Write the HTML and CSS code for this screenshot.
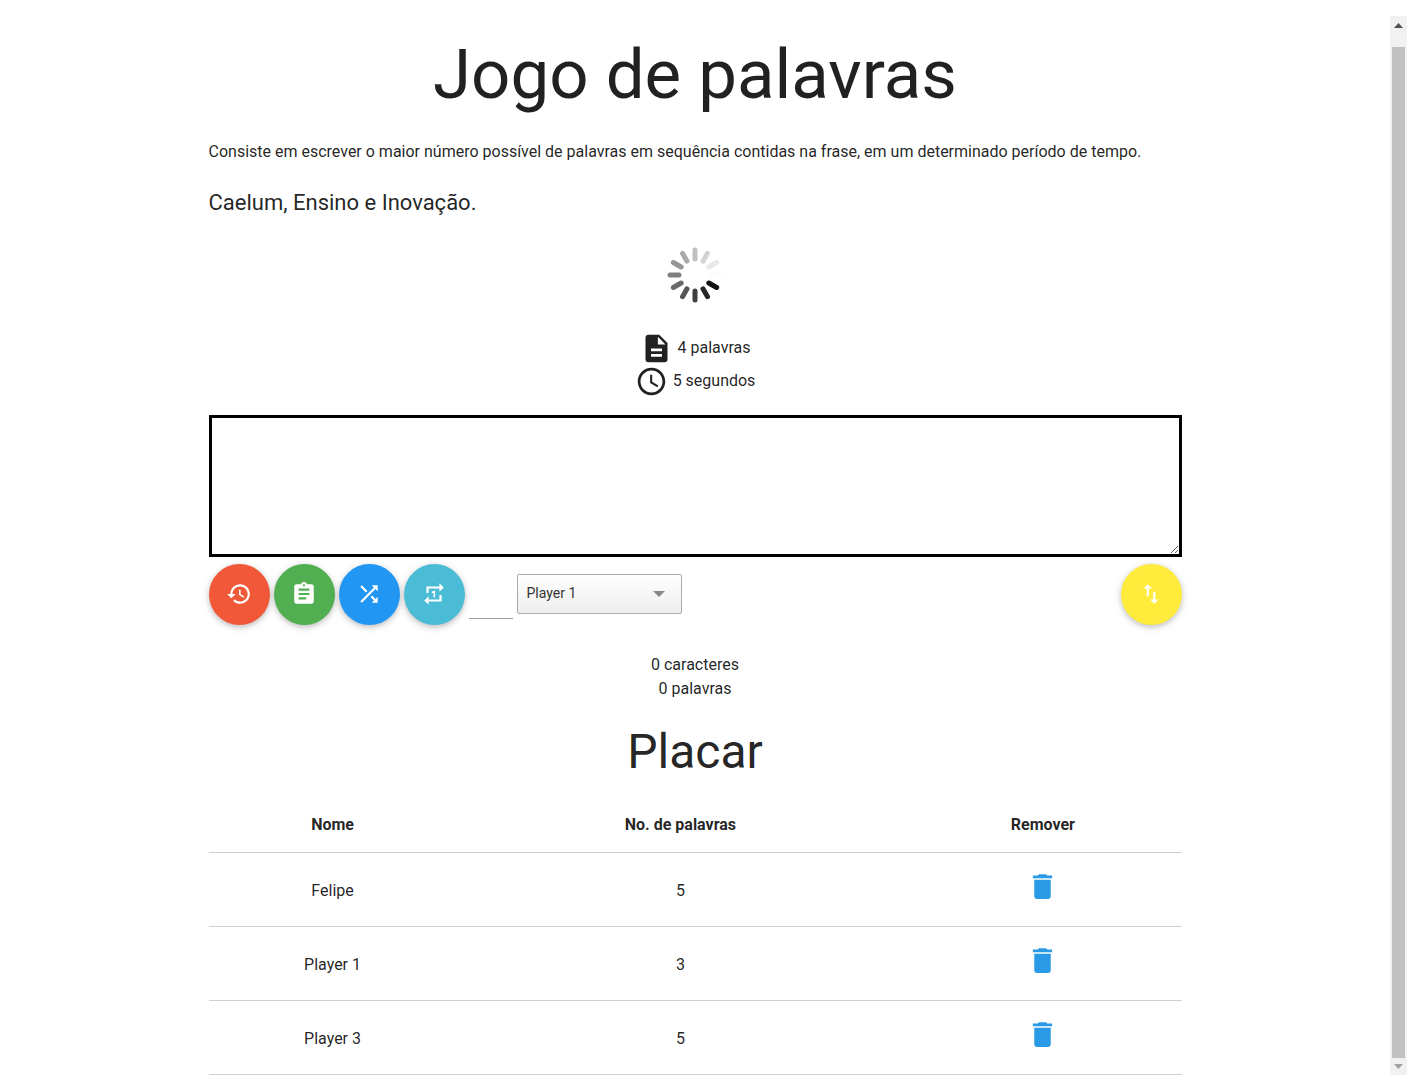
FILE: index.html
```html
<!DOCTYPE html>
<html lang="pt-BR">
<head>
<meta charset="utf-8">
<meta name="viewport" content="width=device-width, initial-scale=1">
<title>Jogo de palavras</title>
<link rel="stylesheet" href="styles.css">
</head>
<body>
<main class="container">
  <h1 class="title">Jogo de palavras</h1>
  <p class="intro">Consiste em escrever o maior número possível de palavras em sequência contidas na frase, em um determinado período de tempo.</p>
  <p class="phrase">Caelum, Ensino e Inovação.</p>

  <svg class="spinner" viewBox="-28 -28 56 56" role="img" aria-label="Carregando" stroke-width="5" stroke-linecap="round">
    <path d="M16 0H25" stroke="#fcfcfc"/>
    <path d="M16 0H25" stroke="#101010" transform="rotate(30)"/>
    <path d="M16 0H25" stroke="#282828" transform="rotate(60)"/>
    <path d="M16 0H25" stroke="#404040" transform="rotate(90)"/>
    <path d="M16 0H25" stroke="#555" transform="rotate(120)"/>
    <path d="M16 0H25" stroke="#6a6a6a" transform="rotate(150)"/>
    <path d="M16 0H25" stroke="#808080" transform="rotate(180)"/>
    <path d="M16 0H25" stroke="#959595" transform="rotate(210)"/>
    <path d="M16 0H25" stroke="#aaa" transform="rotate(240)"/>
    <path d="M16 0H25" stroke="#c0c0c0" transform="rotate(270)"/>
    <path d="M16 0H25" stroke="#d4d4d4" transform="rotate(300)"/>
    <path d="M16 0H25" stroke="#e8e8e8" transform="rotate(330)"/>
  </svg>

  <ul class="stats">
    <li class="stat">
      <svg class="icon-large" viewBox="0 0 24 24" aria-hidden="true"><path d="M14 2H6c-1.100 0-1.990.9-1.990 2L4 20c0 1.100.89 2 1.990 2H18c1.100 0 2-.9 2-2V8l-6-6zm2 16H8v-2h8v2zm0-4H8v-2h8v2zm-3-5V3.500L18.500 9H13z"/></svg>
      <span>4 palavras</span>
    </li>
    <li class="stat">
      <svg class="icon-large" viewBox="0 0 24 24" aria-hidden="true"><path d="M11.990 2C6.470 2 2 6.480 2 12s4.470 10 9.990 10C17.520 22 22 17.520 22 12S17.520 2 11.990 2zM12 20c-4.420 0-8-3.580-8-8s3.580-8 8-8 8 3.580 8 8-3.580 8-8 8zm.5-13H11v6l5.250 3.150.75-1.230-4.500-2.670z"/></svg>
      <span>5 segundos</span>
    </li>
  </ul>

  <textarea class="field" aria-label="Digite a frase"></textarea>

  <div class="toolbar">
    <button type="button" class="fab fab-red" aria-label="Reiniciar">
      <svg class="icon" viewBox="0 0 24 24" aria-hidden="true"><path d="M13 3c-4.970 0-9 4.030-9 9H1l3.890 3.890.07.14L9 12H6c0-3.870 3.130-7 7-7s7 3.130 7 7-3.130 7-7 7c-1.930 0-3.680-.79-4.940-2.060l-1.420 1.420C8.270 19.990 10.510 21 13 21c4.970 0 9-4.030 9-9s-4.030-9-9-9zm-1 5v5l4.280 2.540.72-1.210-3.500-2.080V8H12z"/></svg>
    </button>
    <button type="button" class="fab fab-green" aria-label="Placar">
      <svg class="icon" viewBox="0 0 24 24" aria-hidden="true"><path d="M19 3h-4.180C14.400 1.840 13.300 1 12 1c-1.300 0-2.400.84-2.820 2H5c-1.100 0-2 .9-2 2v14c0 1.100.9 2 2 2h14c1.100 0 2-.9 2-2V5c0-1.100-.9-2-2-2zm-7 0c.55 0 1 .45 1 1s-.45 1-1 1-1-.45-1-1 .45-1 1-1zm2 14H7v-2h7v2zm3-4H7v-2h10v2zm0-4H7V7h10v2z"/></svg>
    </button>
    <button type="button" class="fab fab-blue" aria-label="Frase aleatória">
      <svg class="icon" viewBox="0 0 24 24" aria-hidden="true"><path d="M10.590 9.170L5.410 4 4 5.410l5.170 5.170 1.420-1.410zM14.500 4l2.040 2.040L4 18.590 5.410 20 17.960 7.460 20 9.500V4h-5.500zm.33 9.410l-1.410 1.410 3.130 3.130L14.500 20H20v-5.500l-2.040 2.040-3.130-3.130z"/></svg>
    </button>
    <button type="button" class="fab fab-cyan" aria-label="Buscar frase">
      <svg class="icon" viewBox="0 0 24 24" aria-hidden="true"><path d="M7 7h10v3l4-4-4-4v3H5v6h2V7zm10 10H7v-3l-4 4 4 4v-3h12v-6h-2v4zm-4-2V9h-1l-2 1v1h1.500v4H13z"/></svg>
    </button>
    <input type="text" class="phrase-id" aria-label="Número da frase">
    <div class="select">
      <select class="select-box" aria-label="Jogador">
        <option>Player 1</option>
      </select>
    </div>
    <button type="button" class="fab fab-yellow" aria-label="Sincronizar">
      <svg class="icon" viewBox="0 0 24 24" aria-hidden="true"><path d="M16 17.010V10h-2v7.010h-3L15 21l4-3.990h-3zM9 3L5 6.990h3V14h2V6.990h3L9 3z"/></svg>
    </button>
  </div>

  <ul class="counters">
    <li>0 caracteres</li>
    <li>0 palavras</li>
  </ul>

  <section>
    <h2 class="subtitle">Placar</h2>
    <table class="scores">
      <thead>
        <tr><th class="col-name">Nome</th><th class="col-words">No. de palavras</th><th>Remover</th></tr>
      </thead>
      <tbody>
        <tr><td>Felipe</td><td>5</td><td><a href="#" class="remove" aria-label="Remover Felipe"><svg class="icon-large" viewBox="0 0 24 24" aria-hidden="true"><path d="M6 19c0 1.100.9 2 2 2h8c1.100 0 2-.9 2-2V7H6v12zM19 4h-3.500l-1-1h-5l-1 1H5v2h14V4z"/></svg></a></td></tr>
        <tr><td>Player 1</td><td>3</td><td><a href="#" class="remove" aria-label="Remover Player 1"><svg class="icon-large" viewBox="0 0 24 24" aria-hidden="true"><path d="M6 19c0 1.100.9 2 2 2h8c1.100 0 2-.9 2-2V7H6v12zM19 4h-3.500l-1-1h-5l-1 1H5v2h14V4z"/></svg></a></td></tr>
        <tr><td>Player 3</td><td>5</td><td><a href="#" class="remove" aria-label="Remover Player 3"><svg class="icon-large" viewBox="0 0 24 24" aria-hidden="true"><path d="M6 19c0 1.100.9 2 2 2h8c1.100 0 2-.9 2-2V7H6v12zM19 4h-3.500l-1-1h-5l-1 1H5v2h14V4z"/></svg></a></td></tr>
      </tbody>
    </table>
  </section>
</main>
<div class="scrollbar" aria-hidden="true">
  <svg class="scroll-arrow" viewBox="0 0 17 17"><path d="M4 12L8.500 7L13 12z" fill="#505050"/></svg>
  <div class="scroll-thumb"></div>
  <svg class="scroll-arrow" viewBox="0 0 17 17"><path d="M4 6L8.500 11L13 6z" fill="#a3a3a3"/></svg>
</div>
</body>
</html>
```
FILE: styles.css
```css
* {
  box-sizing: border-box;
}

body {
  margin: 0;
  padding-top: 16px;
  display: grid;
  grid-template-columns: 1fr 17px;
  align-items: start;
  background: #fff;
  color: rgba(0, 0, 0, 0.87);
  font: 16px/24px Roboto, sans-serif;
}

.container {
  width: 70%;
  margin: 0 auto;
}

.title,
.subtitle {
  font-weight: 400;
  text-align: center;
}

.title {
  margin: 21px 0 27px;
  font-size: 69px;
  line-height: 76px;
}

.intro {
  margin: 0 0 23px;
}

.phrase {
  margin: 0;
  font-size: 22px;
  line-height: 32px;
}

.spinner {
  display: block;
  width: 56px;
  height: 56px;
  margin: 28px auto 29px;
}

.stats,
.counters {
  margin: 0;
  padding: 0;
  list-style: none;
  text-align: center;
}

.stat {
  display: flex;
  justify-content: center;
  align-items: flex-start;
  gap: 5px;
  line-height: 32px;
}

.icon,
.icon-large {
  display: block;
  fill: currentColor;
}

.icon {
  width: 26px;
  height: 26px;
}

.icon-large {
  width: 33px;
  height: 33px;
}

.field {
  display: block;
  width: 100%;
  height: 142px;
  margin: 17px 0 7px;
  padding: 4px;
  border: 3px solid #000;
  background: #fff;
  font: inherit;
}

.toolbar {
  display: flex;
  align-items: center;
  gap: 4px;
}

.fab {
  display: flex;
  justify-content: center;
  align-items: center;
  flex: none;
  width: 61px;
  height: 61px;
  padding: 0 0 2px;
  border: 0;
  border-radius: 50%;
  color: #fff;
  box-shadow: 0 2px 5px rgba(0, 0, 0, 0.16), 0 2px 10px rgba(0, 0, 0, 0.12);
}

.fab-red {
  background: #f15838;
}

.fab-green {
  background: #51af51;
}

.fab-blue {
  background: #2196f3;
}

.fab-cyan {
  background: #4bbcd5;
}

.fab-yellow {
  margin-left: auto;
  background: #ffeb3b;
}

.phrase-id {
  align-self: flex-end;
  width: 44px;
  height: 49px;
  margin-bottom: 6px;
  padding: 0;
  border: 0;
  border-bottom: 1px solid #9e9e9e;
  background: transparent;
  font: inherit;
}

.select {
  position: relative;
  width: 165px;
  padding-bottom: 1px;
}

.select::after {
  content: "";
  position: absolute;
  top: 17px;
  right: 17px;
  border: 6px solid transparent;
  border-top-color: #888;
  border-bottom: 0;
  pointer-events: none;
}

.select-box {
  display: block;
  width: 100%;
  height: 40px;
  padding: 0 9px 2px;
  appearance: none;
  border: 1px solid #aaa;
  border-radius: 2px;
  background: linear-gradient(#fff, #eee);
  color: #333;
  font: 14px/20px Roboto, sans-serif;
}

.counters {
  margin-top: 28px;
}

.subtitle {
  margin: 24px 0 17px;
  font-size: 48px;
  line-height: 53px;
}

.scores {
  width: 100%;
  border-collapse: collapse;
  table-layout: fixed;
}

.scores tr {
  height: 74px;
  border-bottom: 1px solid #d0d0d0;
}

.scores thead tr {
  height: 57px;
}

.scores th,
.scores td {
  padding: 3px 0 0;
  text-align: center;
}

.col-name {
  width: 25.5%;
}

.col-words {
  width: 46%;
}

.remove {
  display: inline-block;
  padding-bottom: 8px;
  color: #2b9ae6;
  vertical-align: middle;
}

.scrollbar {
  position: sticky;
  top: 16px;
  display: flex;
  flex-direction: column;
  height: calc(100vh - 16px);
  background: #f1f1f1;
}

.scroll-arrow {
  flex: none;
  width: 17px;
  height: 17px;
}

.scroll-thumb {
  flex: 1;
  margin: 14px 2px 0;
  background: #c1c1c1;
}
```
